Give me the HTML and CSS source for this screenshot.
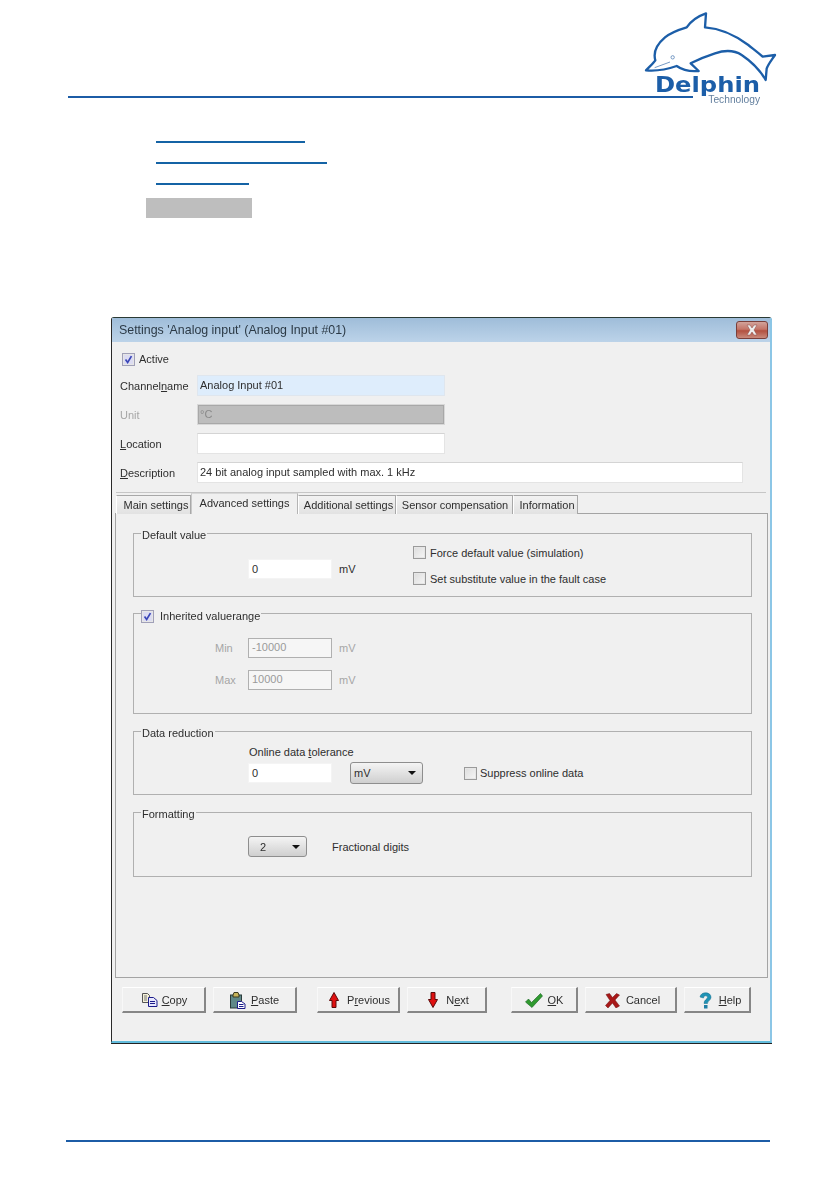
FILE: index.html
```html
<!DOCTYPE html>
<html lang="en">
<head>
<meta charset="utf-8">
<title>Settings dialog</title>
<link rel="stylesheet" href="styles.css">
</head>
<body>
<div class="page">
  <header class="head">
    <div class="head-line"></div>
    <svg class="logo" viewBox="0 0 657 360" width="219" height="120" aria-label="Delphin Technology">
      <path class="logo-stroke" d="M78 211 C88 200 100 190 106 181 C100 160 108 135 135 112 C155 96 180 88 200 82 C215 60 235 48 258 40 L255 82 C300 85 345 105 385 135 C400 147 415 158 428 170 L465 165 C455 180 443 195 440 206 L437 240 C420 210 395 185 365 165 C345 152 315 150 285 160 C260 168 235 178 212 190 L236 213 C215 215 190 212 170 198 C150 205 110 214 78 211 Z"/>
      <path class="logo-thin" d="M104 203 L150 186"/>
      <circle class="logo-thin" cx="158" cy="172" r="5"/>
      <text class="logo-name" x="105" y="275" textLength="315" lengthAdjust="spacingAndGlyphs">Delphin</text>
      <text class="logo-sub" x="265" y="310" textLength="155" lengthAdjust="spacingAndGlyphs">Technology</text>
    </svg>
  </header>

  <div class="links">
    <span class="link link-a"></span>
    <span class="link link-b"></span>
    <span class="link link-c"></span>
  </div>
  <div class="mark"></div>

  <section class="dialog">
    <div class="titlebar">
      <span class="title">Settings 'Analog input' (Analog Input #01)</span>
      <span class="close">
        <svg viewBox="0 0 14 12" width="14" height="12"><path d="M2 1h3l2 3 2-3h3L9 6l3 5H9L7 8l-2 3H2l3-5z" fill="#eee" stroke="#8a4a44" stroke-width=".5"/></svg>
      </span>
    </div>

    <div class="body">
      <div class="active-row">
        <span class="check checked"><svg viewBox="0 0 13 13"><path d="M3 6.500l2.500 3.500L10 2.500" /></svg></span>
        <span>Active</span>
      </div>
      <div class="row">
        <span class="label">Channel<u>n</u>ame</span>
        <div class="field field-focus">Analog Input #01</div>
      </div>
      <div class="row">
        <span class="label muted">Unit</span>
        <div class="field field-off">°C</div>
      </div>
      <div class="row">
        <span class="label"><u>L</u>ocation</span>
        <div class="field"></div>
      </div>
      <div class="row">
        <span class="label"><u>D</u>escription</span>
        <div class="field field-wide">24 bit analog input sampled with max. 1 kHz</div>
      </div>

      <div class="tabs">
        <span class="tab tab-main">Main settings</span>
        <span class="tab tab-on">Advanced settings</span>
        <span class="tab tab-add">Additional settings</span>
        <span class="tab tab-sen">Sensor compensation</span>
        <span class="tab tab-inf">Information</span>
      </div>

      <div class="panel">
        <div class="group g-default">
          <span class="legend">Default value</span>
          <div class="g-flex">
            <div class="num num-top">0</div>
            <span class="unit unit-top">mV</span>
            <div class="checks">
              <div class="check-line"><span class="check"></span><span>Force default value (simulation)</span></div>
              <div class="check-line"><span class="check"></span><span>Set substitute value in the fault case</span></div>
            </div>
          </div>
        </div>

        <div class="group g-range">
          <span class="legend legend-check">
            <span class="check checked"><svg viewBox="0 0 13 13"><path d="M3 6.500l2.500 3.500L10 2.500" /></svg></span>
            <span>Inherited valuerange</span>
          </span>
          <div class="range-row">
            <span class="range-label">Min</span>
            <div class="num num-off">-10000</div>
            <span class="unit muted">mV</span>
          </div>
          <div class="range-row">
            <span class="range-label">Max</span>
            <div class="num num-off">10000</div>
            <span class="unit muted">mV</span>
          </div>
        </div>

        <div class="group g-reduce">
          <span class="legend">Data reduction</span>
          <div class="tol-label">Online data <u>t</u>olerance</div>
          <div class="tol-row">
            <div class="num">0</div>
            <div class="select select-unit"><span>mV</span><i class="caret"></i></div>
            <div class="check-line suppress"><span class="check"></span><span>Suppress online data</span></div>
          </div>
        </div>

        <div class="group g-format">
          <span class="legend">Formatting</span>
          <div class="fmt-row">
            <div class="select select-digits"><span>2</span><i class="caret"></i></div>
            <span>Fractional digits</span>
          </div>
        </div>
      </div>

      <div class="buttons">
        <div class="btn b-copy">
          <svg viewBox="0 0 16 14" width="16" height="14">
            <path d="M.5.500h5l2 2v7h-7z" fill="#f4f0d8" stroke="#555"/>
            <path d="M2 3h3M2 5h3M2 7h3" stroke="#777"/>
            <path d="M6.500 4.500h5l3.500 3v6h-8.500z" fill="#e8e8ff" stroke="#1c1c8a"/>
            <path d="M8 8.500h5M8 10.500h5" stroke="#1c1c8a"/>
          </svg>
          <span><u>C</u>opy</span>
        </div>
        <div class="btn b-paste">
          <svg viewBox="0 0 16 17" width="16" height="17">
            <rect x=".5" y="3" width="11" height="13" fill="#5f8888" stroke="#2b3b3b"/>
            <path d="M3 3l1-2.500h4L9 3v2H3z" fill="#c8b45a" stroke="#3a3a20"/>
            <path d="M7.500 9.500h4l3.500 2.500v4.500H7.500z" fill="#fff" stroke="#1c1c8a"/>
            <path d="M9 12.500h4.500M9 14.500h4.500" stroke="#1c1c8a"/>
          </svg>
          <span><u>P</u>aste</span>
        </div>
        <div class="btn b-prev">
          <svg viewBox="0 0 10 16" width="10" height="16"><path d="M5 .5l4.500 8H7v7H3v-7H.5z" fill="#e01010" stroke="#5a0a0a"/></svg>
          <span>P<u>r</u>evious</span>
        </div>
        <div class="btn b-next">
          <svg viewBox="0 0 10 16" width="10" height="16"><path d="M3 .5h4v7h2.500L5 15.500.5 7.500H3z" fill="#e01010" stroke="#5a0a0a"/></svg>
          <span>N<u>e</u>xt</span>
        </div>
        <div class="btn b-ok">
          <svg viewBox="0 0 18 15" width="18" height="15"><path d="M.5 9l3-3 3 3.500L15.500.5 17.500 3 7 14.500z" fill="#2f9a2f" stroke="#14601e" stroke-width=".6"/></svg>
          <span><u>O</u>K</span>
        </div>
        <div class="btn b-cancel">
          <svg viewBox="0 0 15 15" width="15" height="15"><path d="M1 1.500L4.500.5l3 4L11.500.5l3 1.500-4.500 5 4.500 6-3.500 2-3.500-5L3 15l-2.500-2.500 4.500-5z" fill="#a81818" stroke="#6a0e0e" stroke-width=".5"/></svg>
          <span>Cancel</span>
        </div>
        <div class="btn b-help">
          <svg viewBox="0 0 13 17" width="13" height="17"><path d="M1 5C1.500 2 4 .8 6.500.8c3.500 0 5.500 2 5.500 4.500 0 3-3.500 3.500-3.500 6.200H5c0-3.700 3.500-4.300 3.500-6.200C8.500 4.300 7.500 3.800 6.500 3.800c-1 0-1.800.7-2 2.200z" fill="#1f93b5" stroke="#176f8c" stroke-width=".5"/><rect x="5" y="13" width="3.500" height="3.500" fill="#1f7fa5"/></svg>
          <span><u>H</u>elp</span>
        </div>
      </div>
    </div>
  </section>

  <footer class="foot"></footer>
</div>
</body>
</html>
```

FILE: styles.css
```css
* { box-sizing: border-box; }
html, body { margin: 0; padding: 0; background: #fff; }
body { font-family: "Liberation Sans", Arial, sans-serif; font-size: 11px; color: #2e2e2e; }
.page { position: relative; width: 839px; height: 1191px; overflow: hidden; }

/* page header */
.head { height: 98px; position: relative; }
.head-line { position: absolute; top: 96px; left: 68px; width: 625px; height: 2px; background: #1c5ca6; }
.logo { position: absolute; left: 620px; top: 0; filter: blur(.3px); }
.logo-stroke { fill: #fff; stroke: #1c5ea8; stroke-width: 7; stroke-linejoin: round; }
.logo-thin { fill: none; stroke: #5b86b8; stroke-width: 2.500; }
.logo-name { font-family: "DejaVu Sans", sans-serif; font-weight: 700; font-size: 65px; fill: #1c5ea8; }
.logo-sub { font-family: "Liberation Sans", sans-serif; font-size: 30px; fill: #64809f; }

/* link stubs */
.links { margin: 24px 0 0 156px; }
.link { display: block; height: 21px; border-bottom: 2px solid #1463a5; }
.link-a { width: 149px; }
.link-b { width: 171px; }
.link-c { width: 93px; }
.mark { width: 106px; height: 20px; margin: 13px 0 0 146px; background: #bebebe; }

/* dialog */
.dialog { width: 661px; height: 726px; margin: 99px 0 0 111px; background: #f0f0f0; border-top: 1px solid #2a3a34; border-left: 1px solid #2a2a2a; border-right: 2px solid #8cc6e6; border-bottom: 2px solid #62bcdc; border-radius: 3px 3px 0 0; box-shadow: 0 1px 0 #222; filter: blur(.3px); }
.titlebar { height: 24px; display: flex; align-items: center; justify-content: space-between; padding: 0 2px 0 7px; background: linear-gradient(#9fbdd9, #bcd3e9); }
.title { font-size: 12.400px; color: #2c3a46; }
.close { display: flex; align-items: center; justify-content: center; width: 32px; height: 18px; border: 1px solid #7a3f3a; border-radius: 3px; background: linear-gradient(#d2a39b 0, #c47568 45%, #b2503f 55%, #c98a7c 100%); }

.body { padding: 10px 0 0; }
.active-row { display: flex; align-items: center; gap: 4px; height: 14px; margin: 0 0 9px 10px; }
.check { display: block; flex: none; width: 13px; height: 13px; border: 1px solid #9a9a9a; background: linear-gradient(135deg, #dcdcdc, #f6f6f6); box-shadow: inset 0 0 0 1px #e6e6e6; }
.check.checked { background: #dcdcf2; border-color: #a0a0b8; }
.check svg { display: block; width: 11px; height: 11px; }
.check svg path { fill: none; stroke: #3a46b8; stroke-width: 2; }

.row { display: flex; align-items: center; height: 21px; margin: 0 0 8px 8px; }
.label { width: 77px; flex: none; padding-top: 1px; }
.muted { color: #a6a6a6; }
.field { width: 248px; height: 21px; line-height: 18px; padding: 0 2px; background: #fff; border: 1px solid #e4e4e4; border-top-color: #d4d4d4; }
.field-focus { background: #deedfc; border-color: #dfe6ee; }
.field-off { background: #bdbdbd; color: #8a8a8a; border: 1px solid #d8d8d8; box-shadow: inset 0 0 0 1px #a8a8a8; }
.field-wide { width: 546px; }

/* tabs */
.tabs { display: flex; align-items: flex-end; height: 22px; margin: 9px 4px -1px 4px; border-top: 1px solid #c6c6c6; position: relative; z-index: 1; }
.tab { display: block; height: 19px; line-height: 18px; text-align: center; background: linear-gradient(#f2f2f2, #e2e2e2); border: 1px solid #a8a8a8; border-bottom: 0; border-left-color: #fff; }
.tab-main { width: 75px; padding-left: 5px; }
.tab-on { width: 107px; height: 21px; line-height: 18px; background: #f0f0f0; border-color: #b4b4b4; border-top-color: #d8d8d8; border-left-color: #c8c8c8; }
.tab-add { width: 98px; padding-left: 3px; }
.tab-sen { width: 117px; padding-left: 1px; }
.tab-inf { width: 65px; padding-left: 3px; }

.panel { width: 653px; height: 465px; margin-left: 3px; padding: 19px 0 0 17px; border: 1px solid #a4a4a4; background: #f0f0f0; }
.group { position: relative; width: 619px; border: 1px solid #b0b0b0; background: #f0f0f0; }
.legend { position: absolute; top: -5px; left: 7px; padding: 0 1px; height: 14px; line-height: 13px; background: linear-gradient(#f0f0f0 60%, transparent 60%); }
.legend-check { display: flex; align-items: center; gap: 6px; top: -5px; padding: 0 1px 0 0; }
.g-default { height: 64px; padding-left: 114px; margin-bottom: 16px; }
.g-range { height: 101px; padding: 23px 0 0 81px; margin-bottom: 17px; }
.g-reduce { height: 64px; padding: 13px 0 0 115px; margin-bottom: 17px; }
.g-format { height: 65px; padding: 23px 0 0 114px; }

.g-flex { display: flex; align-items: flex-start; }
.num { flex: none; width: 84px; height: 20px; line-height: 19px; padding: 0 3px; background: #fff; border: 1px solid #f4f4f4; }
.num-top { margin-top: 25px; }
.num-off { color: #9a9a9a; background: #f6f6f6; border-color: #b0b0b0; line-height: 16px; }
.unit { display: block; width: 81px; height: 20px; line-height: 20px; padding-left: 7px; }
.unit-top { margin-top: 25px; }
.checks { display: flex; flex-direction: column; gap: 13px; margin-top: 12px; }
.check-line { display: flex; align-items: center; gap: 4px; height: 13px; }

.range-row { display: flex; align-items: center; height: 21px; margin-bottom: 11px; color: #a6a6a6; }
.range-label { width: 33px; }

.tol-label { height: 14px; line-height: 14px; margin: 0 0 3px 0; }
.tol-row { display: flex; align-items: center; margin-left: -1px; }
.select { position: relative; display: flex; align-items: center; height: 22px; padding-left: 3px; border: 1px solid #8e8e8e; border-radius: 3px; background: linear-gradient(#f4f4f4, #cfcfcf); }
.select-unit { width: 73px; margin-left: 18px; }
.select-digits { width: 59px; height: 21px; padding-left: 11px; }
.caret { position: absolute; right: 6px; top: 8px; width: 0; height: 0; border-style: solid; border-width: 4px 4px 0; border-color: #111 transparent transparent; }
.suppress { margin-left: 41px; gap: 3px; }
.fmt-row { display: flex; align-items: center; gap: 25px; }

/* buttons */
.buttons { display: flex; margin: 9px 0 0 10px; }
.btn { display: flex; align-items: center; justify-content: center; gap: 4px; height: 26px; padding-top: 1px; background: #f0f0f0; border: 1px solid; border-color: #fff #868686 #868686 #f8f8f8; border-bottom-width: 2px; border-right-width: 2px; }
.b-copy { width: 84px; padding-left: 2px; }
.b-paste { width: 84px; margin-left: 7px; gap: 5px; }
.b-prev { width: 83px; margin-left: 20px; gap: 8px; padding-left: 3px; }
.b-next { width: 80px; margin-left: 7px; gap: 8px; padding-left: 4px; }
.b-ok { width: 67px; margin-left: 24px; gap: 5px; }
.b-cancel { width: 92px; margin-left: 7px; gap: 6px; padding-left: 4px; }
.b-help { width: 67px; margin-left: 7px; gap: 7px; padding-left: 6px; }

/* page footer */
.foot { width: 704px; height: 2px; margin: 97px 0 0 66px; background: #1c5ca6; }
```
